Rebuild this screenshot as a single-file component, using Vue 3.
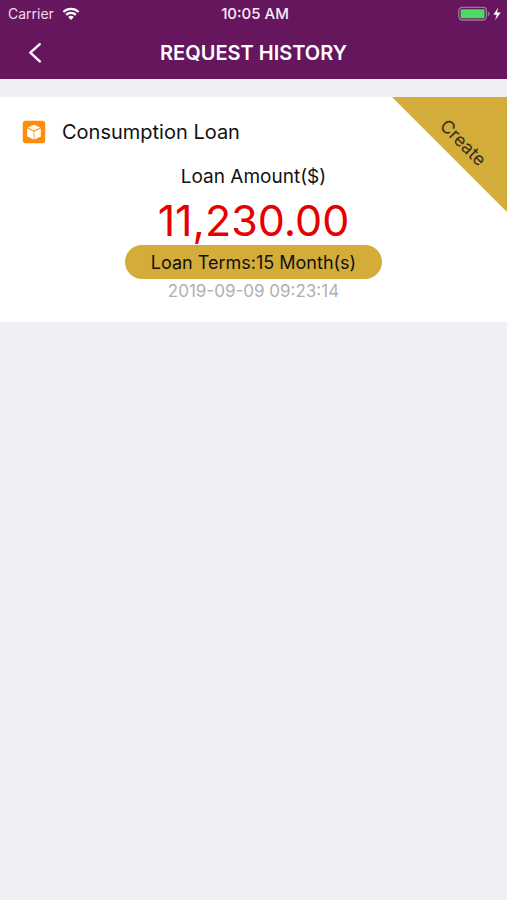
<script setup>
import { reactive } from 'vue'

const status = reactive({ carrier: 'Carrier', time: '10:05 AM' })

const loans = reactive([
  {
    id: 1,
    type: 'Consumption Loan',
    amount: 11230,
    terms: 15,
    date: '2019-09-09 09:23:14',
    state: 'Create'
  }
])

// 11230 -> 11,230.00
function formatAmount(value) {
  return value.toLocaleString('en-US', { minimumFractionDigits: 2 })
}

function goBack() {
  window.history.back()
}
</script>

<template>
  <div class="page">
    <header class="top">
      <div class="status-bar">
        <div class="status-left">
          <span>{{ status.carrier }}</span>
          <svg class="wifi" viewBox="0 0 18 14" aria-hidden="true">
            <path d="M1.4 5a10.8 10.8 0 0 1 15.2 0" />
            <path d="M4.2 7.9a6.8 6.8 0 0 1 9.6 0" />
            <path class="dot" d="M6.2 10.1a4 4 0 0 1 5.6 0L9 13z" />
          </svg>
        </div>
        <span class="time">{{ status.time }}</span>
        <div class="status-right">
          <svg class="battery" viewBox="0 0 44 16" aria-hidden="true">
            <rect class="shell" x="0.8" y="1.4" width="27.6" height="12.6" rx="3.4" />
            <rect class="charge" x="2.6" y="3.2" width="24" height="9" rx="1.2" />
            <path class="cap" d="M29.8 5.4q1.8.6 1.8 2.3t-1.8 2.3z" />
            <path class="bolt" d="M40.2 1.6 35.4 8.7h3.3l-1.6 5.5 5.6-7.6h-3.7z" />
          </svg>
        </div>
      </div>
      <nav class="nav-bar">
        <button class="back" type="button" aria-label="Back" v-on:click="goBack">
          <svg viewBox="0 0 14 22" aria-hidden="true">
            <path d="M11.8 2.2 2.3 10.6l9.5 8.8" />
          </svg>
        </button>
        <h1>REQUEST HISTORY</h1>
      </nav>
    </header>

    <main class="list">
      <article v-for="loan in loans" :key="loan.id" class="card">
        <div class="card-title">
          <svg class="cube" viewBox="0 0 24 24" aria-hidden="true">
            <rect x="0.8" y="0.8" width="22.4" height="22.4" rx="2.6" fill="#ff8c0a" />
            <path d="M12 4.8 18.2 7.6 12 10.6 5.8 7.6z" />
            <path d="M5.2 8.5 11.6 11.5v7.9L5.2 16.4z" />
            <path d="M18.8 8.5 12.4 11.5v7.9l6.4-3z" />
          </svg>
          <h2>{{ loan.type }}</h2>
        </div>
        <p class="label">Loan Amount($)</p>
        <p class="amount">{{ formatAmount(loan.amount) }}</p>
        <p class="terms">Loan Terms:{{ loan.terms }} Month(s)</p>
        <p class="date">{{ loan.date }}</p>
        <div class="ribbon"><span>{{ loan.state }}</span></div>
      </article>
    </main>
  </div>
</template>

<style>
body {
  background-color: #efeff4;
}
</style>

<style scoped>
.page {
  min-height: 100vh;
  background-color: #efeff4;
  font-family: Inter, "Liberation Sans", sans-serif;
  color: #111;
}

h1, h2, p {
  margin: 0;
  font-weight: 400;
}

.top {
  background-color: #66165d;
  color: #fff;
}

.status-bar {
  display: grid;
  grid-template-columns: 1fr auto 1fr;
  align-items: center;
  height: 27px;
  padding: 0 5px 0 8px;
  font-size: 14px;
}

.status-left {
  display: flex;
  align-items: center;
  gap: 8px;
  color: #f0dcee;
}

.wifi {
  width: 18px;
  height: 14px;
  fill: none;
  stroke: #fff;
  stroke-width: 2.3;
}

.wifi .dot {
  fill: #fff;
  stroke: none;
}

.time {
  font-size: 15px;
  font-weight: 500;
  color: #f8ecf7;
}

.status-right {
  display: flex;
  justify-content: flex-end;
}

.battery {
  width: 44px;
  height: 16px;
}

.shell {
  fill: none;
  stroke: #a374a0;
  stroke-width: 1.3;
}

.charge {
  fill: #4cd964;
}

.cap {
  fill: #a374a0;
}

.bolt {
  fill: #fff;
}

.nav-bar {
  display: grid;
  grid-template-columns: 70px 1fr 70px;
  align-items: center;
  height: 52px;
}

.back {
  display: flex;
  justify-content: center;
  padding: 8px 0;
  border: none;
  background: none;
  cursor: pointer;
}

.back svg {
  width: 14px;
  height: 22px;
  fill: none;
  stroke: #fff;
  stroke-width: 2.4;
  stroke-linecap: round;
  stroke-linejoin: round;
}

.nav-bar h1 {
  font-size: 20px;
  font-weight: 600;
  line-height: 28px;
  text-align: center;
}

.list {
  display: flex;
  flex-direction: column;
  gap: 18px;
  padding-top: 18px;
}

.card {
  position: relative;
  display: flex;
  flex-direction: column;
  align-items: center;
  padding: 18px 0;
  background-color: #fff;
}

.card-title {
  display: flex;
  align-items: center;
  align-self: stretch;
  gap: 16px;
  height: 34px;
  padding: 0 22px;
  margin-bottom: 14px;
}

.cube {
  width: 24px;
  height: 24px;
  fill: #fff;
}

.card-title h2 {
  font-size: 20px;
}

.label {
  font-size: 19px;
  line-height: 28px;
}

.amount {
  margin-top: 4px;
  font-size: 43px;
  line-height: 50px;
  color: #e60000;
}

.terms {
  padding: 2px 26px 0;
  border-radius: 17px;
  background-color: #d4ac3a;
  font-size: 18px;
  line-height: 32px;
}

.date {
  font-size: 17px;
  line-height: 25px;
  color: #b0b0b0;
}

/* Folded corner with the state of the request */
.ribbon {
  position: absolute;
  top: 0;
  right: 0;
  display: flex;
  align-items: center;
  justify-content: center;
  box-sizing: border-box;
  width: 115px;
  height: 115px;
  padding: 0 0 24px 28px;
  clip-path: polygon(0 0, 100% 0, 100% 100%);
  background-color: #d4ac3a;
  font-size: 18px;
  color: #33301f;
}

.ribbon span {
  transform: rotate(45deg);
}
</style>
